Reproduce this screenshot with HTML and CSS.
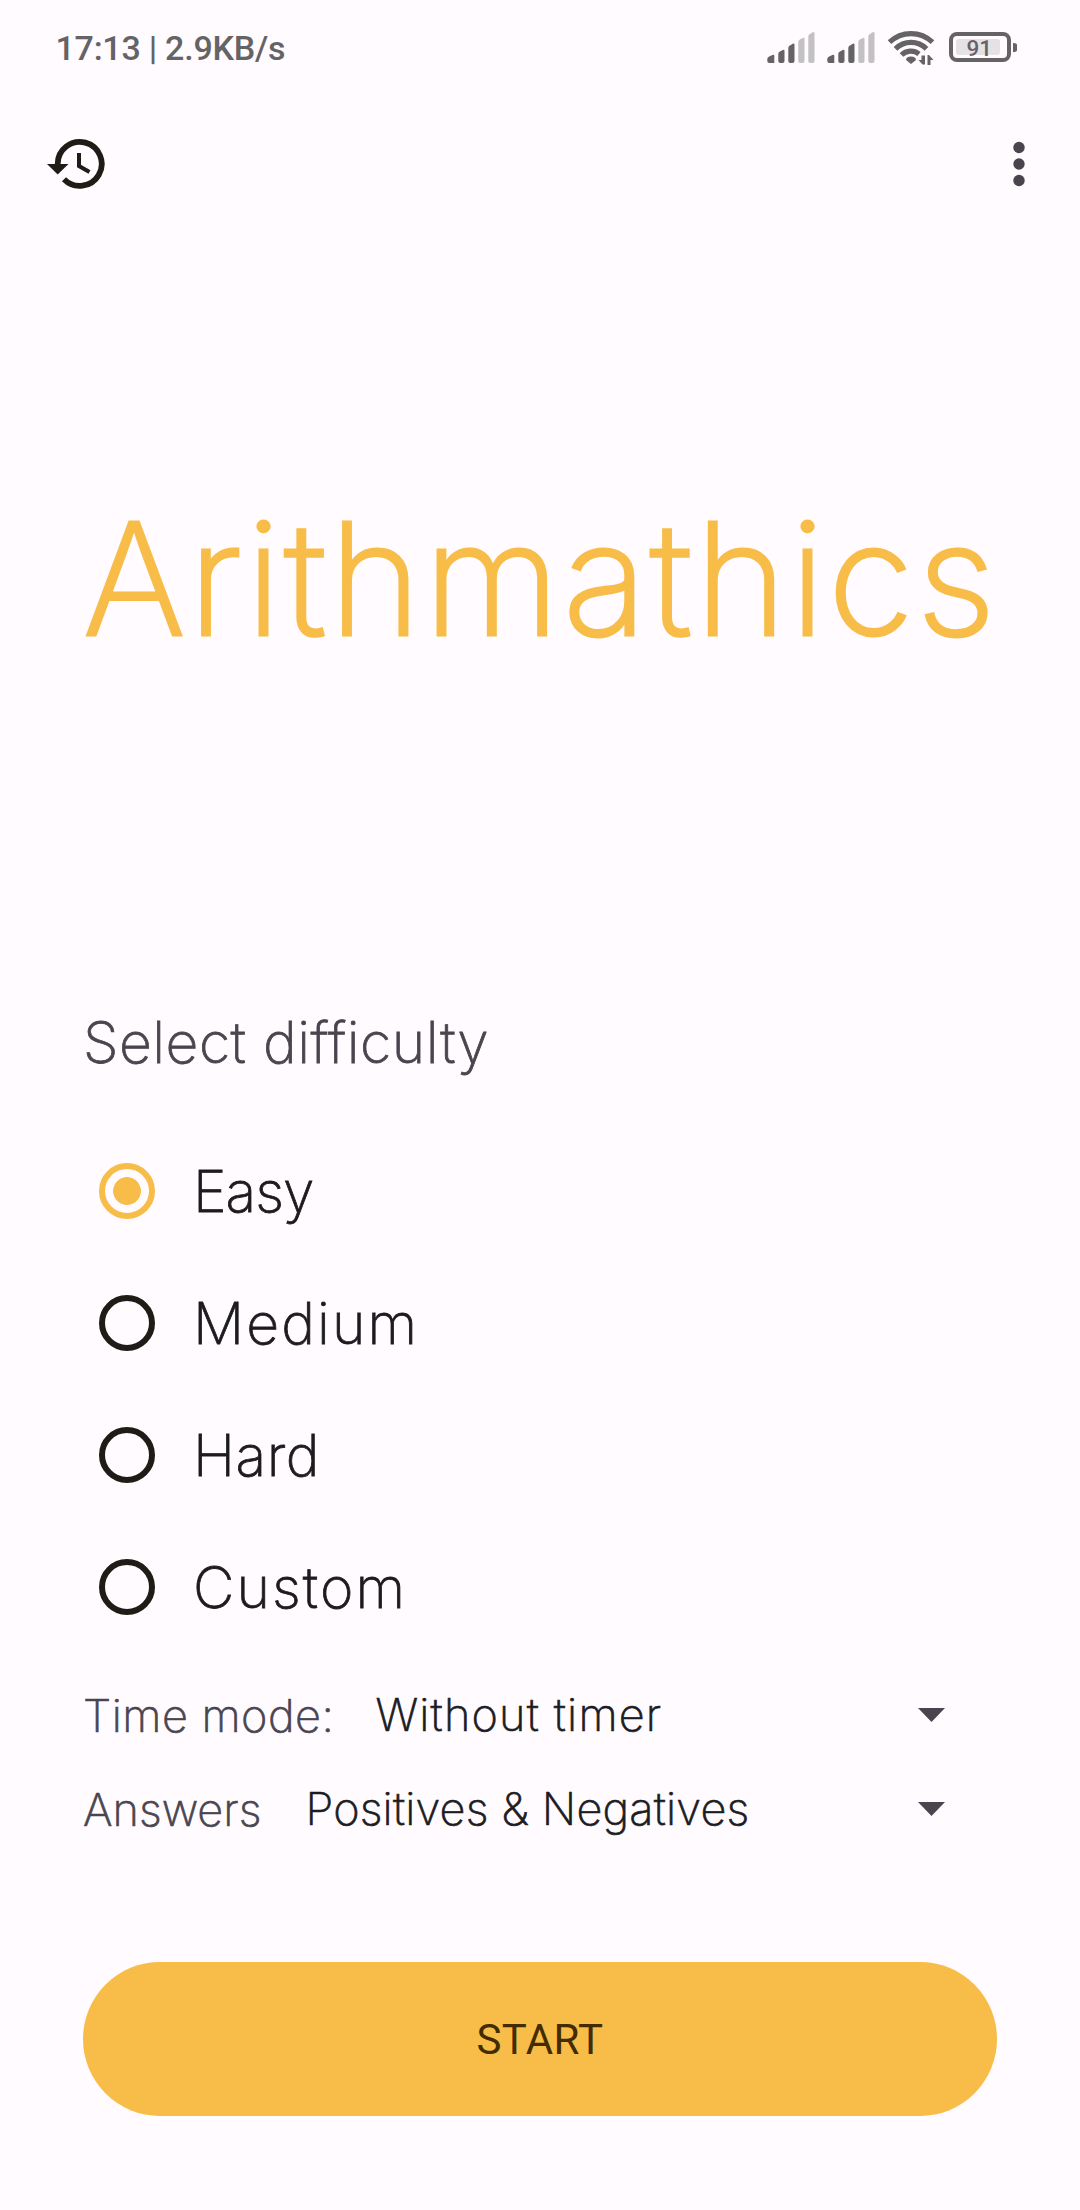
FILE: index.html
```html
<!DOCTYPE html>
<html lang="en">
<head>
<meta charset="utf-8">
<title>Arithmathics</title>
<link rel="stylesheet" href="styles.css">
</head>
<body>
<div class="status">
  <span class="clock">17:13 | 2.9KB/s</span>
  <svg class="indicators" width="254" height="40" viewBox="766 28 254 40">
    <defs>
      <g id="signal">
        <path fill="#656366" d="M0 59q0-1.500 1.500-2.200L5 55q2-.8 2 1v7H2q-2 0-2-2zM11 54q0-1.500 1.200-2.200L15.500 50q1.700-.8 1.700 1v10q0 2-2 2H13q-2 0-2-2zM21 48q0-1.500 1.200-2.200L25.500 43.800q1.700-.8 1.700 1V61q0 2-2 2H23q-2 0-2-2z"/>
        <path fill="#c3c1c4" d="M31 42q0-1.500 1.200-2.200L35.500 37.900q1.700-.8 1.700 1V61q0 2-2 2H33q-2 0-2-2zM41 36.500q0-1.500 1.200-2.200L45.500 32.300q1.700-.8 1.700 1V61q0 2-2 2H43q-2 0-2-2z"/>
      </g>
    </defs>
    <use href="#signal" x="767.3"/>
    <use href="#signal" x="827.3"/>
    <g fill="none" stroke="#656366" stroke-width="5.200">
      <path d="M889.500 42.200a31 31 0 0 1 43 0"/>
      <path d="M895.500 48.800a22 22 0 0 1 31 0"/>
      <path d="M901.500 55a13.300 13.300 0 0 1 17.500-1"/>
    </g>
    <path fill="#656366" d="M906 60q0-3.500 5-3.500t5 3.500l-5 4zM925 55.500v9h-2.500l-4-4.500h3v-4.500zM927.500 65V55h1.500l4.500 5h-3v5z"/>
    <rect x="956" y="39" width="44" height="16" rx="3" fill="#e5e2e6"/>
    <rect x="951" y="34" width="58" height="26" rx="6" fill="none" stroke="#656366" stroke-width="4"/>
    <path fill="#656366" d="M1013 43q4 0 4 2v5q0 2-4 2z"/>
    <text class="level" x="966.500" y="55.600">91</text>
  </svg>
</div>
<div class="toolbar">
  <svg width="60" height="56" viewBox="0 0 60 56">
    <path fill="none" stroke="#1f1b16" stroke-width="5.800" d="M10.700 27A22 22 0 1 1 17 42.300"/>
    <path fill="#1f1b16" d="M0 27h21.500L10.700 37.500z"/>
    <path fill="none" stroke="#1f1b16" stroke-width="4" d="M32 16v13l10.500 6"/>
  </svg>
  <svg width="12" height="56" viewBox="0 0 12 56" fill="#49454f">
    <circle cx="6" cy="10.500" r="5.700"/><circle cx="6" cy="27" r="5.700"/><circle cx="6" cy="43.500" r="5.700"/>
  </svg>
</div>
<main>
  <h1>Arithmathics</h1>
  <h2>Select difficulty</h2>
  <div class="options">
    <label class="option"><i class="radio checked"></i><span class="easy">Easy</span></label>
    <label class="option"><i class="radio"></i><span class="wide">Medium</span></label>
    <label class="option"><i class="radio"></i><span>Hard</span></label>
    <label class="option"><i class="radio"></i><span class="wide">Custom</span></label>
  </div>
  <div class="setting"><span class="name time">Time mode:</span><span class="value">Without timer</span><i class="arrow"></i></div>
  <div class="setting"><span class="name">Answers</span><span class="value positives">Positives &amp; Negatives</span><i class="arrow"></i></div>
  <button class="start">START</button>
</main>
</body>
</html>
```
FILE: styles.css
```css
* { box-sizing: border-box; }
body {
  margin: 0;
  height: 2210px;
  background: #fffbff;
  color: #1c1b1f;
  font-family: Inter, sans-serif;
  font-weight: 200;
  font-variant-ligatures: none;
  white-space: nowrap;
}
.status {
  display: flex;
  justify-content: space-between;
  height: 96px;
  padding: 28px 60px 0 55.5px;
  color: #656366;
}
.clock {
  font: 500 34px/40px Roboto, sans-serif;
  letter-spacing: -.25px;
}
.level { font: 500 22.5px Roboto, sans-serif; fill: #656366; }
.toolbar {
  display: flex;
  justify-content: space-between;
  height: 403px;
  padding: 41px 55px 0 47px;
}
main { padding: 0 83px; }
h1 {
  margin: 0 0 349px;
  color: #f7bd48;
  font-size: 156px;
  font-weight: 200;
  line-height: 160px;
  letter-spacing: 3.2px;
  -webkit-text-stroke: 3px #f7bd48;
}
h2 {
  margin: 0 0 47px;
  color: #49454f;
  font-size: 57px;
  font-weight: 200;
  line-height: 70px;
  letter-spacing: .5px;
  -webkit-text-stroke: .8px #49454f;
}
.options { height: 543px; }
.option {
  display: flex;
  align-items: center;
  gap: 38px;
  height: 132px;
  padding-left: 16px;
  font-size: 57px;
  letter-spacing: .5px;
  -webkit-text-stroke: .8px #1c1b1f;
}
.easy { letter-spacing: -1px; }
.wide { letter-spacing: 2.1px; }
.radio {
  width: 56px;
  height: 56px;
  border: 6px solid #1f1b16;
  border-radius: 50%;
}
.checked {
  border-color: #f7bd48;
  background: radial-gradient(circle, #f7bd48 13.5px, transparent 14.2px);
}
.setting {
  display: flex;
  align-items: center;
  height: 94px;
  padding-right: 52px;
  font-size: 45px;
  -webkit-text-stroke: .7px #1c1b1f;
}
.name {
  margin-right: 44px;
  color: #49454f;
  letter-spacing: 0;
  -webkit-text-stroke-color: #49454f;
}
.time {
  margin-right: 41px;
  letter-spacing: .5px;
}
.value {
  padding-bottom: 2px;
  letter-spacing: 1.2px;
}
.positives { letter-spacing: .2px; }
.arrow {
  width: 27px;
  height: 14px;
  margin-left: auto;
  background: #49454f;
  clip-path: polygon(0 0, 100% 0, 50% 100%);
}
.start {
  display: block;
  width: 914px;
  height: 154px;
  margin: 106px 0 0;
  padding: 0;
  border: 0;
  border-radius: 77px;
  background: #f7bd48;
  color: #432c00;
  font: 400 42px Roboto, sans-serif;
  letter-spacing: .4px;
}
```
